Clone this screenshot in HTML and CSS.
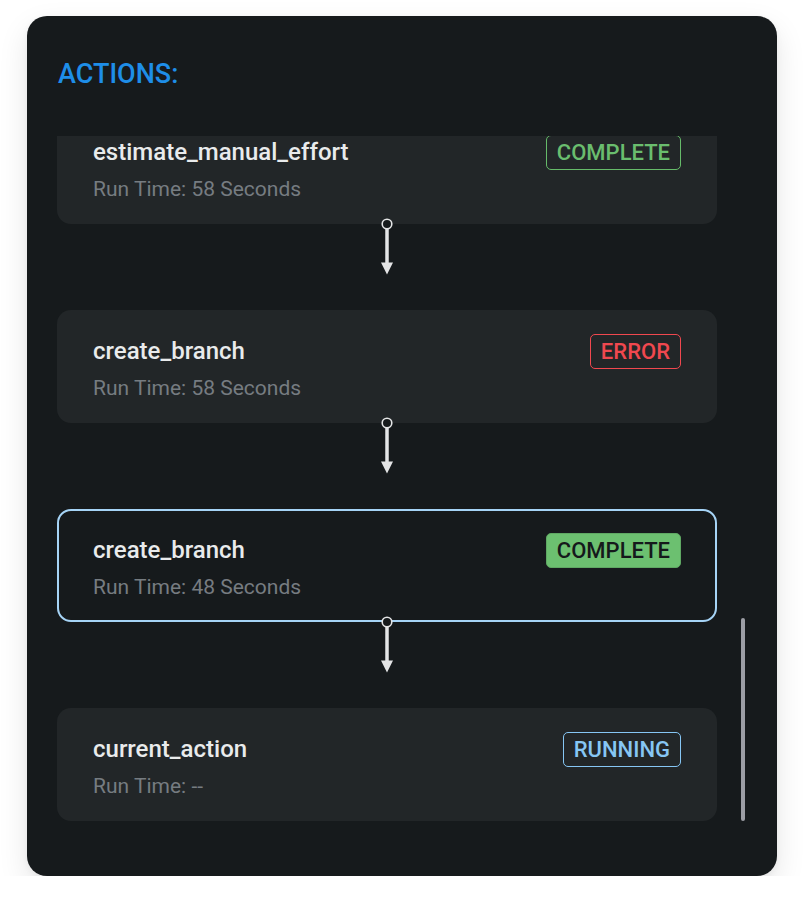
FILE: index.html
```html
<!DOCTYPE html>
<html lang="en">
<head>
<meta charset="utf-8">
<title>Actions</title>
<link rel="stylesheet" href="styles.css">
</head>
<body>
<div class="panel">
  <h2 class="panel-title">ACTIONS:</h2>
  <div class="scroller">
    <div class="flow">
      <div class="card">
        <div class="card-head">
          <span class="card-title">estimate_manual_effort</span>
          <span class="badge badge-complete">COMPLETE</span>
        </div>
        <div class="card-sub">Run Time: 58 Seconds</div>
      </div>
      <div class="connector">
        <svg class="connector-svg" width="20" height="86" viewBox="0 0 20 86">
          <line x1="10" y1="5" x2="10" y2="41" class="c-line"/>
          <polygon points="4,38.5 16,38.5 10,50.5" class="c-head"/>
          <circle cx="10" cy="0" r="4.8" class="c-dot"/>
        </svg>
      </div>
      <div class="card">
        <div class="card-head">
          <span class="card-title">create_branch</span>
          <span class="badge badge-error">ERROR</span>
        </div>
        <div class="card-sub">Run Time: 58 Seconds</div>
      </div>
      <div class="connector">
        <svg class="connector-svg" width="20" height="86" viewBox="0 0 20 86">
          <line x1="10" y1="5" x2="10" y2="41" class="c-line"/>
          <polygon points="4,38.5 16,38.5 10,50.5" class="c-head"/>
          <circle cx="10" cy="0" r="4.8" class="c-dot"/>
        </svg>
      </div>
      <div class="card card-selected">
        <div class="card-head">
          <span class="card-title">create_branch</span>
          <span class="badge badge-complete-filled">COMPLETE</span>
        </div>
        <div class="card-sub">Run Time: 48 Seconds</div>
      </div>
      <div class="connector">
        <svg class="connector-svg" width="20" height="86" viewBox="0 0 20 86">
          <line x1="10" y1="5" x2="10" y2="41" class="c-line"/>
          <polygon points="4,38.5 16,38.5 10,50.5" class="c-head"/>
          <circle cx="10" cy="0" r="4.8" class="c-dot"/>
        </svg>
      </div>
      <div class="card">
        <div class="card-head">
          <span class="card-title">current_action</span>
          <span class="badge badge-running">RUNNING</span>
        </div>
        <div class="card-sub">Run Time: --</div>
      </div>
    </div>
    <div class="thumb"></div>
  </div>
</div>
</body>
</html>
```

FILE: styles.css
```css
* {
  box-sizing: border-box;
}

html, body {
  margin: 0;
  background: #ffffff;
}

body {
  padding: 16px 27px 0 27px;
  font-family: Roboto, "Liberation Sans", sans-serif;
}

.panel {
  width: 750px;
  height: 860px;
  background: #161a1c;
  border-radius: 20px;
  padding: 42px 30px 55px 30px;
  box-shadow: 0 12px 30px rgba(0, 0, 0, 0.1), 0 2px 6px rgba(0, 0, 0, 0.05);
  display: flex;
  flex-direction: column;
}

.panel-title {
  margin: 0 0 46px 1px;
  font-size: 27px;
  line-height: 32px;
  font-weight: 500;
  color: #1e8ee8;
}

.scroller {
  position: relative;
  flex: 1;
  overflow: hidden;
  display: flex;
  flex-direction: column;
  justify-content: flex-end;
}

.flow {
  flex: none;
  width: 660px;
  display: flex;
  flex-direction: column;
}

.card {
  height: 113px;
  background: #222628;
  border-radius: 14px;
  padding: 24px 36px 23px 36px;
}

.card-selected {
  background: #161a1c;
  border: 2px solid #a6d4f6;
  padding: 22px 34px 21px 34px;
}

.card-head {
  display: flex;
  align-items: center;
  justify-content: space-between;
  height: 35px;
}

.card-title {
  font-size: 24px;
  line-height: 35px;
  font-weight: 500;
  color: #e9ebec;
}

.card-sub {
  margin-top: 7px;
  font-size: 21px;
  line-height: 24px;
  color: #767c81;
}

.badge {
  display: inline-block;
  font-size: 22px;
  line-height: 33px;
  font-weight: 500;
  padding: 0 10px;
  border: 1px solid;
  border-radius: 5px;
}

.badge-complete {
  color: #6abd6e;
  border-color: #66bb6a;
}

.badge-error {
  color: #f0484f;
  border-color: #f0484f;
}

.badge-running {
  color: #86c6f4;
  border-color: #86c6f4;
}

.badge-complete-filled {
  color: #15191b;
  background: #6cc070;
  border-color: #5fa863;
}

.connector {
  height: 86px;
  display: flex;
  justify-content: center;
}

.connector-svg {
  display: block;
  overflow: visible;
}

.c-line {
  stroke: #e4e5e6;
  stroke-width: 3.5;
}

.c-head {
  fill: #e4e5e6;
}

.c-dot {
  fill: #161a1c;
  stroke: #e4e5e6;
  stroke-width: 1.6;
}

.thumb {
  position: absolute;
  right: 2px;
  bottom: 0;
  width: 4px;
  height: 203px;
  border-radius: 2px;
  background: #9c9ea5;
}
```
